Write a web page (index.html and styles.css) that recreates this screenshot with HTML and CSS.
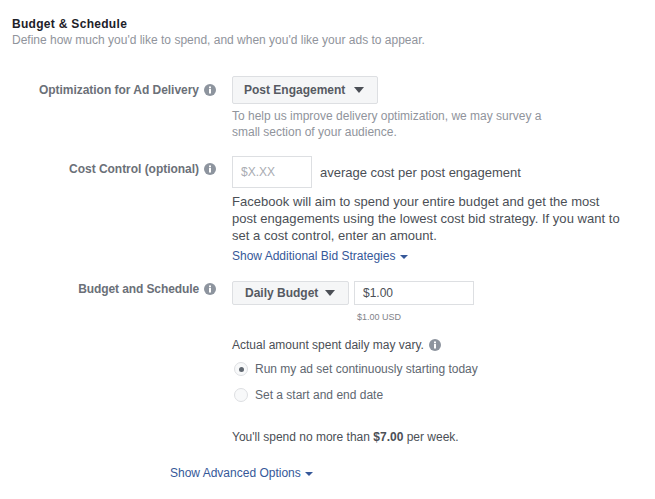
FILE: index.html
```html
<!DOCTYPE html>
<html lang="en">
<head>
<meta charset="utf-8">
<title>Budget &amp; Schedule</title>
<link rel="stylesheet" href="styles.css">
</head>
<body>
<svg class="defs" width="0" height="0" aria-hidden="true"><defs>
<symbol id="info" viewBox="0 0 12 12"><circle cx="6" cy="6" r="6" fill="#8d949e"/><rect x="5" y="5" width="2" height="4.5" fill="#fff"/><rect x="5" y="2.5" width="2" height="1.8" fill="#fff"/></symbol>
</defs></svg>
<main class="page">
  <header class="head">
    <h1>Budget &amp; Schedule</h1>
    <p>Define how much you'd like to spend, and when you'd like your ads to appear.</p>
  </header>

  <section class="row row-opt">
    <div class="label"><span>Optimization for Ad Delivery</span><svg class="info"><use href="#info"/></svg></div>
    <div class="field">
      <button class="select select-opt">Post Engagement<i class="caret"></i></button>
      <p class="hint">To help us improve delivery optimization, we may survey a<br>small section of your audience.</p>
    </div>
  </section>

  <section class="row row-cost">
    <div class="label"><span>Cost Control (optional)</span><svg class="info"><use href="#info"/></svg></div>
    <div class="field">
      <div class="inline">
        <div class="input input-cost">$X.XX</div>
        <span class="avg">average cost per post engagement</span>
      </div>
      <p class="body">Facebook will aim to spend your entire budget and get the most<br>post engagements using the lowest cost bid strategy. If you want to<br>set a cost control, enter an amount.</p>
      <a class="link link-bid">Show Additional Bid Strategies<i class="mini"></i></a>
    </div>
  </section>

  <section class="row row-budget">
    <div class="label"><span>Budget and Schedule</span><svg class="info"><use href="#info"/></svg></div>
    <div class="field">
      <div class="inline tight">
        <button class="select select-daily">Daily Budget<i class="caret"></i></button>
        <div class="amount-wrap">
          <div class="input input-amount">$1.00</div>
          <div class="usd">$1.00 USD</div>
        </div>
      </div>
      <div class="vary"><span>Actual amount spent daily may vary.</span><svg class="info"><use href="#info"/></svg></div>
      <div class="radios">
        <div class="radio-row"><i class="radio on"></i><span>Run my ad set continuously starting today</span></div>
        <div class="radio-row"><i class="radio"></i><span>Set a start and end date</span></div>
      </div>
      <p class="week">You'll spend no more than <b>$7.00</b> per week.</p>
    </div>
  </section>

  <a class="link link-adv">Show Advanced Options<i class="mini"></i></a>
</main>
</body>
</html>
```
FILE: styles.css
```css
* { box-sizing: border-box; }
html, body { margin: 0; padding: 0; background: #fff; }
body { width: 655px; height: 499px; overflow: hidden; font-family: "Liberation Sans", Arial, sans-serif; font-size: 12px; color: #4b4f56; }
.defs { position: absolute; }
.page { padding: 16px 0 0 12px; display: flex; flex-direction: column; }
.head h1 { margin: 0; font-size: 12px; line-height: 16px; font-weight: 700; color: #1d2129; letter-spacing: .3px; }
.head p { margin: 0; line-height: 16px; color: #90949c; }
.row { display: flex; }
.row-opt { margin-top: 28px; }
.row-cost { margin-top: 16px; }
.row-budget { margin-top: 17px; }
.label { width: 204px; flex: none; display: flex; justify-content: flex-end; align-items: center; height: 16px; font-weight: 700; color: #6b7078; letter-spacing: -.03px; gap: 5px; }
.row-opt .label { margin-top: 6px; }
.row-cost .label { margin-top: 5px; }
.row-budget .label { margin-top: 0; letter-spacing: -.1px; }
.info { width: 12px; height: 12px; flex: none; }
.field { margin-left: 16px; flex: none; width: 400px; }
.select { display: flex; align-items: center; font: 700 12px "Liberation Sans", Arial, sans-serif; color: #565a62; background: #f5f6f7; border: 1px solid #dddfe2; border-radius: 2px; padding: 0; }
.select-opt { width: 146px; height: 28px; padding-left: 11px; }
.select-daily { width: 117px; height: 24px; padding-left: 12px; }
.caret { width: 0; height: 0; border: 5.5px solid transparent; border-top: 6px solid #4b4f56; border-bottom: 0; margin-left: 9px; }
.select-daily .caret { margin-left: 7px; }
.hint { margin: 4px 0 0; line-height: 16px; color: #90949c; }
.inline { display: flex; align-items: center; }
.tight { align-items: flex-start; gap: 5px; }
.input { background: #fff; border: 1px solid #dddfe2; display: flex; align-items: center; }
.input-cost { width: 80px; height: 32px; padding-left: 8px; color: #a9acb2; }
.avg { margin-left: 8px; color: #4b4f56; font-size: 13px; }
.body { margin: 5px 0 0; font-size: 13px; letter-spacing: .03px; line-height: 17px; color: #4b4f56; }
.link { color: #365899; display: flex; align-items: center; line-height: 16px; }
.link-bid { margin-top: 4px; }
.link-bid .mini { margin-left: 5px; }
.mini { width: 0; height: 0; border: 4px solid transparent; border-top: 4px solid #365899; border-bottom: 0; margin-left: 4px; margin-top: 2px; }
.input-amount { width: 120px; height: 24px; padding-left: 8px; color: #4b4f56; }
.usd { margin-top: 7px; padding-left: 3px; font-size: 9px; line-height: 11px; color: #7f8389; }
.vary { display: flex; align-items: center; gap: 5px; margin-top: 14px; height: 16px; }
.radios { display: flex; flex-direction: column; gap: 10px; margin-top: 8px; padding-left: 2px; color: #606770; }
.radio-row { display: flex; align-items: center; height: 16px; gap: 7px; }
.radio { width: 14px; height: 14px; border-radius: 50%; border: 1px solid #dddfe2; background: #f8f9fa; display: flex; align-items: center; justify-content: center; }
.radio.on::after { content: ""; width: 5px; height: 5px; border-radius: 50%; background: #606770; }
.week { margin: 26px 0 0; line-height: 16px; }
.week b { color: #4b4f56; }
.link-adv { margin: 20px 0 0 158px; }
```
